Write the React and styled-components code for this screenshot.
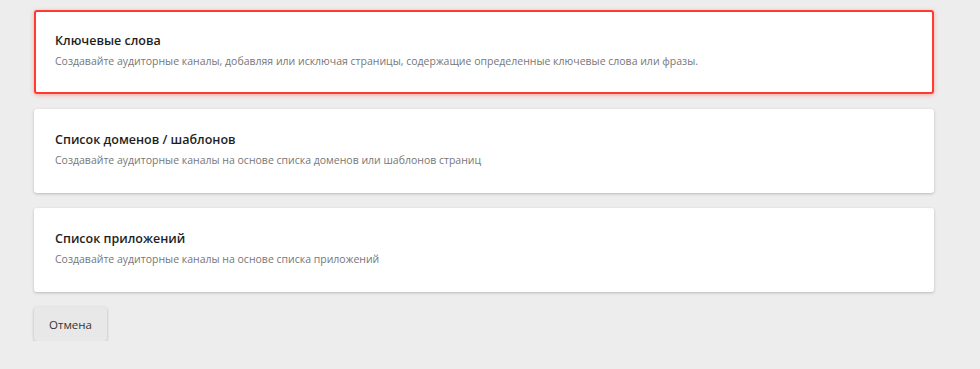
import React from 'react';
import styled, { createGlobalStyle } from 'styled-components';

const GlobalStyle = createGlobalStyle`
  html, body {
    margin: 0;
    padding: 0;
    background: #ededed;
  }
  body {
    font-family: 'Open Sans', 'Noto Sans', sans-serif;
  }
`

const Page = styled.div`
  width: 900px;
  padding: 10px 0 0 34px;
  display: flex;
  flex-direction: column;
  gap: 15px;
`

const Card = styled.div`
  box-sizing: border-box;
  height: 84px;
  background: #fff;
  border-radius: 3px;
  box-shadow: ${props => props.active
    ? '0 1px 4px rgba(255, 40, 30, 0.35)'
    : '0 1px 3px rgba(0, 0, 0, 0.22)'};
  border: 2px solid ${props => props.active ? '#ff3b30' : 'transparent'};
  padding: 20px 19px 0 19px;
  display: flex;
  flex-direction: column;
  gap: 4px;
  cursor: pointer;
`

const Title = styled.div`
  font-size: 12.5px;
  font-weight: 600;
  color: #1e1e1e;
  line-height: 17px;
`

const Desc = styled.div`
  font-size: 10.5px;
  color: #777;
  line-height: 16px;
`

const Footer = styled.div`
  padding-top: 0;
`

const CancelBtn = styled.button`
  width: 73px;
  height: 34px;
  border: none;
  border-radius: 3px;
  background: #e8e8e8;
  box-shadow: 0 1px 3px rgba(0, 0, 0, 0.25);
  font-family: 'Open Sans', 'Noto Sans', sans-serif;
  font-size: 11.5px;
  color: #333;
  cursor: pointer;
`

const items = [
  {
    title: 'Ключевые слова',
    desc: 'Создавайте аудиторные каналы, добавляя или исключая страницы, содержащие определенные ключевые слова или фразы.',
    active: true,
  },
  {
    title: 'Список доменов / шаблонов',
    desc: 'Создавайте аудиторные каналы на основе списка доменов или шаблонов страниц',
  },
  {
    title: 'Список приложений',
    desc: 'Создавайте аудиторные каналы на основе списка приложений',
  },
]

const App = () => {
  return (
    <>
      <GlobalStyle />
      <Page>
        {items.map(item => (
          <Card key={item.title} active={item.active}>
            <Title>{item.title}</Title>
            <Desc>{item.desc}</Desc>
          </Card>
        ))}
        <Footer>
          <CancelBtn>Отмена</CancelBtn>
        </Footer>
      </Page>
    </>
  )
};

export default App;
